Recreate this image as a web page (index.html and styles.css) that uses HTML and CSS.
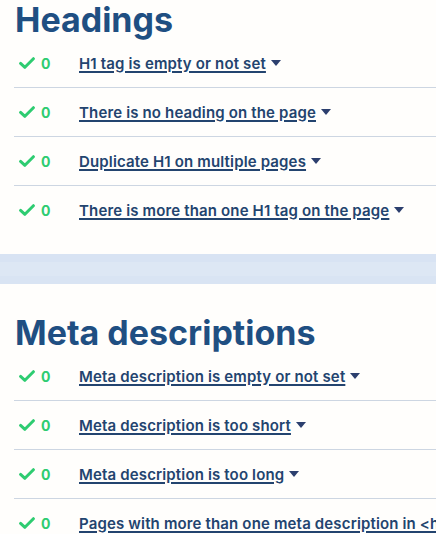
FILE: index.html
```html
<!DOCTYPE html>
<html lang="en">
<head>
<meta charset="utf-8">
<title>Audit</title>
<link rel="stylesheet" href="styles.css">
</head>
<body>
<section class="group group-first">
  <h2 class="group-title">Headings</h2>
  <ul class="checks">
    <li class="check"><span class="status"><svg class="tick" viewBox="0 0 16 12"><path d="M1.6 6.4 L5.9 10.3 L14.4 1.7"/></svg><span class="count">0</span></span><a class="label" href="#">H1 tag is empty or not set</a><span class="caret"></span></li>
    <li class="check"><span class="status"><svg class="tick" viewBox="0 0 16 12"><path d="M1.6 6.4 L5.9 10.3 L14.4 1.7"/></svg><span class="count">0</span></span><a class="label" href="#">There is no heading on the page</a><span class="caret"></span></li>
    <li class="check"><span class="status"><svg class="tick" viewBox="0 0 16 12"><path d="M1.6 6.4 L5.9 10.3 L14.4 1.7"/></svg><span class="count">0</span></span><a class="label" href="#">Duplicate H1 on multiple pages</a><span class="caret"></span></li>
    <li class="check"><span class="status"><svg class="tick" viewBox="0 0 16 12"><path d="M1.6 6.4 L5.9 10.3 L14.4 1.7"/></svg><span class="count">0</span></span><a class="label" href="#">There is more than one H1 tag on the page</a><span class="caret"></span></li>
  </ul>
</section>
<div class="divider"></div>
<section class="group">
  <h2 class="group-title">Meta descriptions</h2>
  <ul class="checks">
    <li class="check"><span class="status"><svg class="tick" viewBox="0 0 16 12"><path d="M1.6 6.4 L5.9 10.3 L14.4 1.7"/></svg><span class="count">0</span></span><a class="label" href="#">Meta description is empty or not set</a><span class="caret"></span></li>
    <li class="check"><span class="status"><svg class="tick" viewBox="0 0 16 12"><path d="M1.6 6.4 L5.9 10.3 L14.4 1.7"/></svg><span class="count">0</span></span><a class="label" href="#">Meta description is too short</a><span class="caret"></span></li>
    <li class="check"><span class="status"><svg class="tick" viewBox="0 0 16 12"><path d="M1.6 6.4 L5.9 10.3 L14.4 1.7"/></svg><span class="count">0</span></span><a class="label" href="#">Meta description is too long</a><span class="caret"></span></li>
    <li class="check"><span class="status"><svg class="tick" viewBox="0 0 16 12"><path d="M1.6 6.4 L5.9 10.3 L14.4 1.7"/></svg><span class="count">0</span></span><a class="label" href="#">Pages with more than one meta description in &lt;head&gt;</a><span class="caret"></span></li>
  </ul>
</section>
</body>
</html>
```
FILE: styles.css
```css
html, body {
  margin: 0;
  padding: 0;
  background: #fffefc;
  overflow: hidden;
}
body {
  width: 436px;
  height: 534px;
  font-family: Inter, "Liberation Sans", sans-serif;
}
.group {
  padding: 3px 0 0 14px;
}
.divider + .group {
  padding-top: 32px;
}
.group-title {
  margin: 0 0 2px 1px;
  font-size: 34px;
  line-height: 34px;
  font-weight: 700;
  color: #1f4f82;
  white-space: nowrap;
}
.checks {
  list-style: none;
  margin: 0;
  padding: 0;
}
.check {
  display: flex;
  align-items: center;
  height: 48px;
  border-bottom: 1px solid #cdd6e2;
  padding-left: 5px;
  white-space: nowrap;
  overflow: hidden;
}
.check:last-child {
  border-bottom: none;
}
.status {
  display: flex;
  align-items: center;
  width: 60px;
  flex: none;
}
.tick {
  width: 16px;
  height: 12px;
  fill: none;
  stroke: #2ecc71;
  stroke-width: 3;
  stroke-linecap: round;
  stroke-linejoin: round;
}
.count {
  margin-left: 6px;
  color: #2ecc71;
  font-size: 14px;
  font-weight: 700;
}
.label {
  color: #23446f;
  font-size: 15px;
  font-weight: 600;
  letter-spacing: 0.15px;
  text-decoration: underline;
  text-decoration-thickness: 1.5px;
  text-underline-offset: 2px;
}
.caret {
  flex: none;
  width: 0;
  height: 0;
  margin-left: 5px;
  border-left: 5px solid transparent;
  border-right: 5px solid transparent;
  border-top: 6px solid #2c3f6e;
}
.divider {
  height: 30px;
  margin-top: 20px;
  background: linear-gradient(#d8e3f3 0, #d8e3f3 8px, #dde7f4 8px, #dde7f4 22px, #d9e4f3 22px);
}
```
